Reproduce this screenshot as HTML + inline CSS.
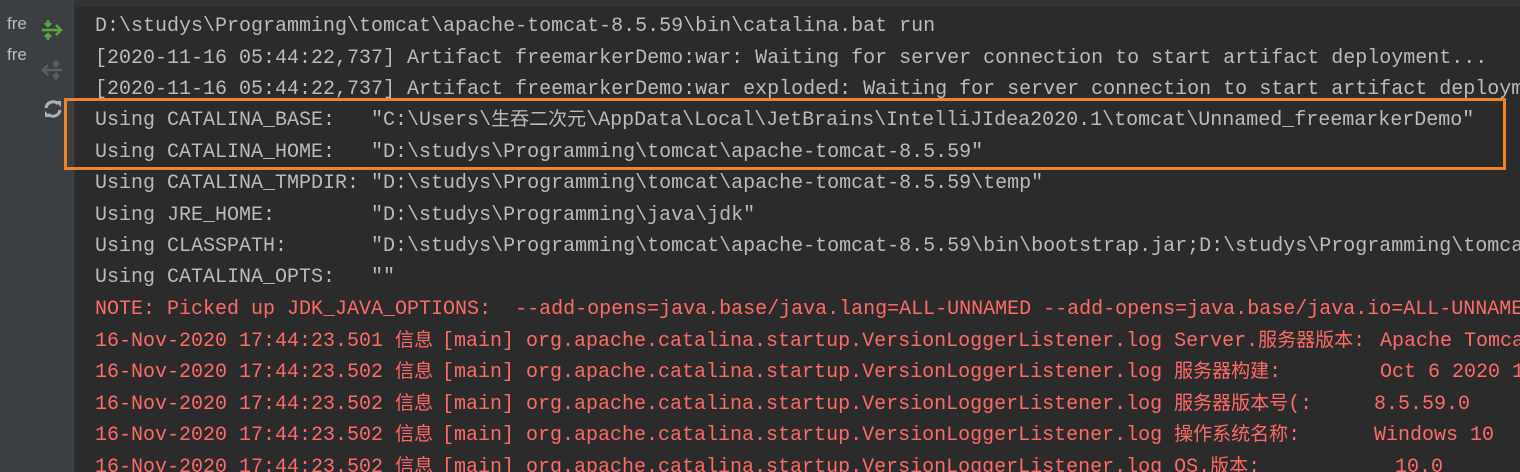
<!DOCTYPE html>
<html><head><meta charset="utf-8"><style>
html,body{margin:0;padding:0;width:1520px;height:472px;overflow:hidden;background:#2b2b2b}
.wrap{position:absolute;left:0;top:0;width:1520px;height:472px;overflow:hidden}
.side{position:absolute;left:0;top:0;width:74px;height:472px;background:#3c3f41}
.sep{position:absolute;left:74px;top:0;width:1px;height:472px;background:#323232}
.top{position:absolute;left:75px;top:0;width:1445px;height:7px;background:#313335;border-bottom:1px solid #2a2a2a}
.fre{position:absolute;left:7px;font:17px "Liberation Sans",sans-serif;color:#bbbbbb}
.l,.s{position:absolute;height:31.5px;padding-top:3px;font:20px "Liberation Mono","Noto Sans CJK SC",monospace;line-height:31.5px;color:#bbbbbb;white-space:pre;overflow:hidden}
.l{left:95px}
.r,.s{color:#ff6b68}
.c{font-family:"Noto Sans CJK SC",sans-serif;font-size:19px;line-height:1;vertical-align:baseline}
.box{position:absolute;left:64px;top:98px;width:1436px;height:66px;border:3px solid #f0822a}
</style></head><body><div class="wrap">
<div class="side"></div><div class="sep"></div><div class="top"></div>
<div class="fre" style="top:14px">fre</div>
<div class="fre" style="top:45px">fre</div>
<svg style="position:absolute;left:40px;top:18px" width="24" height="24" viewBox="0 0 24 24"><g fill="none" stroke="#59a83e" stroke-width="2.5"><path d="M2 12h19M16 7l5 5-5 5M8 2v6M5 5l3 3 3-3M8 22v-6M5 19l3-3 3 3"/></g></svg>
<svg style="position:absolute;left:40px;top:58px" width="24" height="24" viewBox="0 0 24 24"><g fill="none" stroke="#5a5d5f" stroke-width="2.5"><path d="M3 12h19M8 7l-5 5 5 5M16 2v6M13 5l3 3 3-3M16 22v-6M13 19l3-3 3 3"/></g></svg>
<svg style="position:absolute;left:42px;top:98px" width="22" height="22" viewBox="0 0 22 22"><g fill="none" stroke="#aeb1b3" stroke-width="3"><path d="M4 10a7 7 0 0 1 12-4M18 12a7 7 0 0 1-12 4"/></g><path d="M13 3h6v6z M9 19h-6v-6z" fill="#aeb1b3"/></svg>
<div class="box"></div>
<div class="l" style="top:8px;width:1425px">D:\studys\Programming\tomcat\apache-tomcat-8.5.59\bin\catalina.bat run</div>
<div class="l" style="top:40px;width:1425px">[2020-11-16 05:44:22,737] Artifact freemarkerDemo:war: Waiting for server connection to start artifact deployment...</div>
<div class="l" style="top:71px;width:1425px">[2020-11-16 05:44:22,737] Artifact freemarkerDemo:war exploded: Waiting for server connection to start artifact deployment...</div>
<div class="l" style="top:102px;width:1425px">Using CATALINA_BASE:   "C:\Users\<span class="c">生吞二次元</span>\AppData\Local\JetBrains\IntelliJIdea2020.1\tomcat\Unnamed_freemarkerDemo"</div>
<div class="l" style="top:134px;width:1425px">Using CATALINA_HOME:   "D:\studys\Programming\tomcat\apache-tomcat-8.5.59"</div>
<div class="l" style="top:165px;width:1425px">Using CATALINA_TMPDIR: "D:\studys\Programming\tomcat\apache-tomcat-8.5.59\temp"</div>
<div class="l" style="top:197px;width:1425px">Using JRE_HOME:        "D:\studys\Programming\java\jdk"</div>
<div class="l" style="top:228px;width:1425px">Using CLASSPATH:       "D:\studys\Programming\tomcat\apache-tomcat-8.5.59\bin\bootstrap.jar;D:\studys\Programming\tomcat\apache-tomcat-8.5.59\bin\tomcat-juli.jar"</div>
<div class="l" style="top:259px;width:1425px">Using CATALINA_OPTS:   ""</div>
<div class="l r" style="top:291px;width:1425px">NOTE: Picked up JDK_JAVA_OPTIONS:  --add-opens=java.base/java.lang=ALL-UNNAMED --add-opens=java.base/java.io=ALL-UNNAMED</div>

<div class="s" style="left:95px;top:323px">16-Nov-2020 17:44:23.501 <span class="c">信息</span></div><div class="s" style="left:442px;top:323px">[main] org.apache.catalina.startup.VersionLoggerListener.log Server.<span class="c">服务器版本</span>:</div><div class="s" style="left:1380px;top:323px;width:140px">Apache Tomcat/8.5.59</div>
<div class="s" style="left:95px;top:354px">16-Nov-2020 17:44:23.502 <span class="c">信息</span></div><div class="s" style="left:442px;top:354px">[main] org.apache.catalina.startup.VersionLoggerListener.log <span class="c">服务器构建</span>:</div><div class="s" style="left:1380px;top:354px;width:140px">Oct 6 2020 14:11:46 UTC</div>
<div class="s" style="left:95px;top:386px">16-Nov-2020 17:44:23.502 <span class="c">信息</span></div><div class="s" style="left:442px;top:386px">[main] org.apache.catalina.startup.VersionLoggerListener.log <span class="c">服务器版本号</span>(:</div><div class="s" style="left:1374px;top:386px">8.5.59.0</div>
<div class="s" style="left:95px;top:417px">16-Nov-2020 17:44:23.502 <span class="c">信息</span></div><div class="s" style="left:442px;top:417px">[main] org.apache.catalina.startup.VersionLoggerListener.log <span class="c">操作系统名称</span>:</div><div class="s" style="left:1374px;top:417px">Windows 10</div>
<div class="s" style="left:95px;top:449px">16-Nov-2020 17:44:23.502 <span class="c">信息</span></div><div class="s" style="left:442px;top:449px">[main] org.apache.catalina.startup.VersionLoggerListener.log OS.<span class="c">版本</span>:</div><div class="s" style="left:1395px;top:449px">10.0</div>
</div></body></html>
